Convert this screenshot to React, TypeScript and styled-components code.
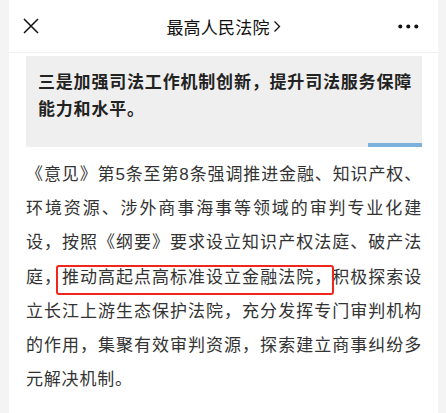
import React from "react";
import styled, { createGlobalStyle } from "styled-components";

const Global = createGlobalStyle`
  html, body { margin: 0; padding: 0; background: #f4f4f4; }
  body { font-family: "Liberation Sans", "Noto Sans CJK SC", sans-serif; }
`;

const Page = styled.div`
  width: 429px;
  min-height: 413px;
  margin: 0 auto 0 9px;
  background: #ffffff;
  display: flex;
  flex-direction: column;
`;

const Header = styled.header`
  height: 53px;
  display: grid;
  grid-template-columns: 60px 1fr 60px;
  align-items: center;
  border-bottom: 1px solid #f1f1f1;
  box-sizing: border-box;
`;

const IconButton = styled.div<{ $align: "start" | "end" }>`
  display: flex;
  justify-content: ${(p) => (p.$align === "start" ? "flex-start" : "flex-end")};
  padding: ${(p) => (p.$align === "start" ? "0 0 0 14px" : "0 19px 0 0")};
  align-items: center;
`;

const Title = styled.div`
  display: flex;
  align-items: center;
  justify-content: center;
  gap: 3px;
  font-size: 17px;
  color: #111;
  letter-spacing: 0.2px;
`;

const Article = styled.article`
  padding: 3px 16px 20px 17px;
  display: flex;
  flex-direction: column;
`;

const Quote = styled.div`
  position: relative;
  background: #efefef;
  padding: 13px 10px 24px 12px;
  font-size: 17px;
  font-weight: 700;
  line-height: 27px;
  letter-spacing: 0.8px;
  color: #222;
  text-align: justify;
`;

const QuoteBar = styled.div`
  position: absolute;
  right: 0;
  bottom: 0;
  width: 54px;
  height: 4px;
  background: #7bb1dc;
`;

const Para = styled.p`
  margin: 11px 0 0;
  font-size: 17px;
  line-height: 34.2px;
  letter-spacing: 0.8px;
  color: #333;
  text-align: justify;
`;

const Marked = styled.span`
  position: relative;
  &::after {
    content: "";
    position: absolute;
    left: -6px;
    right: -2px;
    top: -3px;
    bottom: -8px;
    border: 2px solid #f0261d;
    border-radius: 3px;
    pointer-events: none;
  }
`;

export default function App() {
  return (
    <>
      <Global />
      <Page>
        <Header>
          <IconButton $align="start">
            <svg width="16" height="16" viewBox="0 0 16 16">
              <path d="M1 1 L15 15 M15 1 L1 15" stroke="#111" strokeWidth="1.5" fill="none" />
            </svg>
          </IconButton>
          <Title>
            最高人民法院
            <svg width="8" height="13" viewBox="0 0 8 13">
              <path d="M1.5 1.5 L6.5 6.5 L1.5 11.5" stroke="#111" strokeWidth="1.3" fill="none" />
            </svg>
          </Title>
          <IconButton $align="end">
            <svg width="21" height="5" viewBox="0 0 21 5">
              <circle cx="2.3" cy="2.5" r="2" fill="#111" />
              <circle cx="10.3" cy="2.5" r="2" fill="#111" />
              <circle cx="18.3" cy="2.5" r="2" fill="#111" />
            </svg>
          </IconButton>
        </Header>
        <Article>
          <Quote>
            三是加强司法工作机制创新，提升司法服务保障能力和水平。
            <QuoteBar />
          </Quote>
          <Para>
            《意见》第5条至第8条强调推进金融、知识产权、环境资源、涉外商事海事等领域的审判专业化建设，按照《纲要》要求设立知识产权法庭、破产法庭，
            <Marked>推动高起点高标准设立金融法院，</Marked>
            积极探索设立长江上游生态保护法院，充分发挥专门审判机构的作用，集聚有效审判资源，探索建立商事纠纷多元解决机制。
          </Para>
        </Article>
      </Page>
    </>
  );
}
